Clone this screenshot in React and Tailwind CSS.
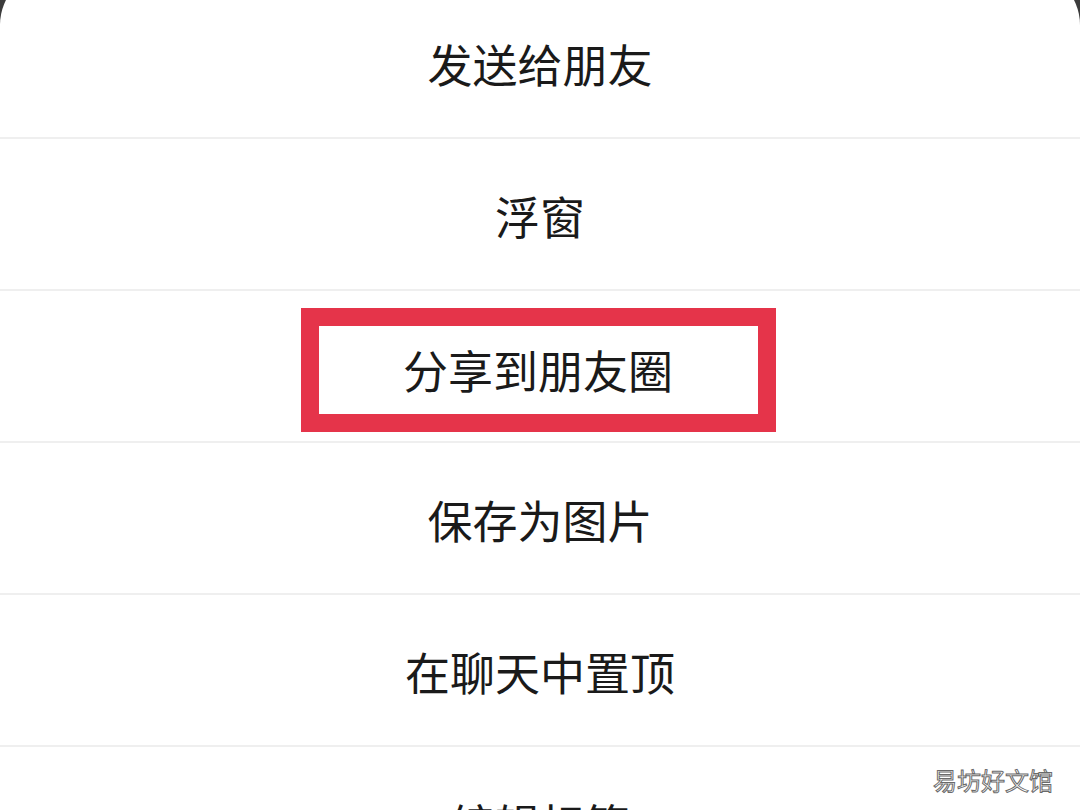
const items = ['发送给朋友', '浮窗', '分享到朋友圈', '保存为图片', '在聊天中置顶', '编辑标签']

export default function App() {
  return (
    <div className="relative h-[810px] w-[1080px] overflow-hidden bg-[#3c3c3c] font-['Noto_Sans_CJK_SC','Noto_Sans',sans-serif]">
      <div className="-mt-[30px] rounded-t-[55px] bg-white pt-[17px]">
        {items.map((label) => (
          <div
            key={label}
            className="flex h-[152px] items-center justify-center border-b-2 border-[#efefef] text-[45px] text-[#1a1a1a]"
          >
            {label === '分享到朋友圈' ? (
              <span className="mr-[4px] mt-[7px] flex h-[124px] w-[475px] items-center justify-center border-[18px] border-[#e5344a]">
                {label}
              </span>
            ) : (
              <span className="mt-[4px]">{label}</span>
            )}
          </div>
        ))}
      </div>

      <div className="absolute bottom-[18px] right-[27px] text-[24px] leading-none text-white [-webkit-text-stroke:1px_#6a6a6a]">
        易坊好文馆
      </div>
    </div>
  )
}
